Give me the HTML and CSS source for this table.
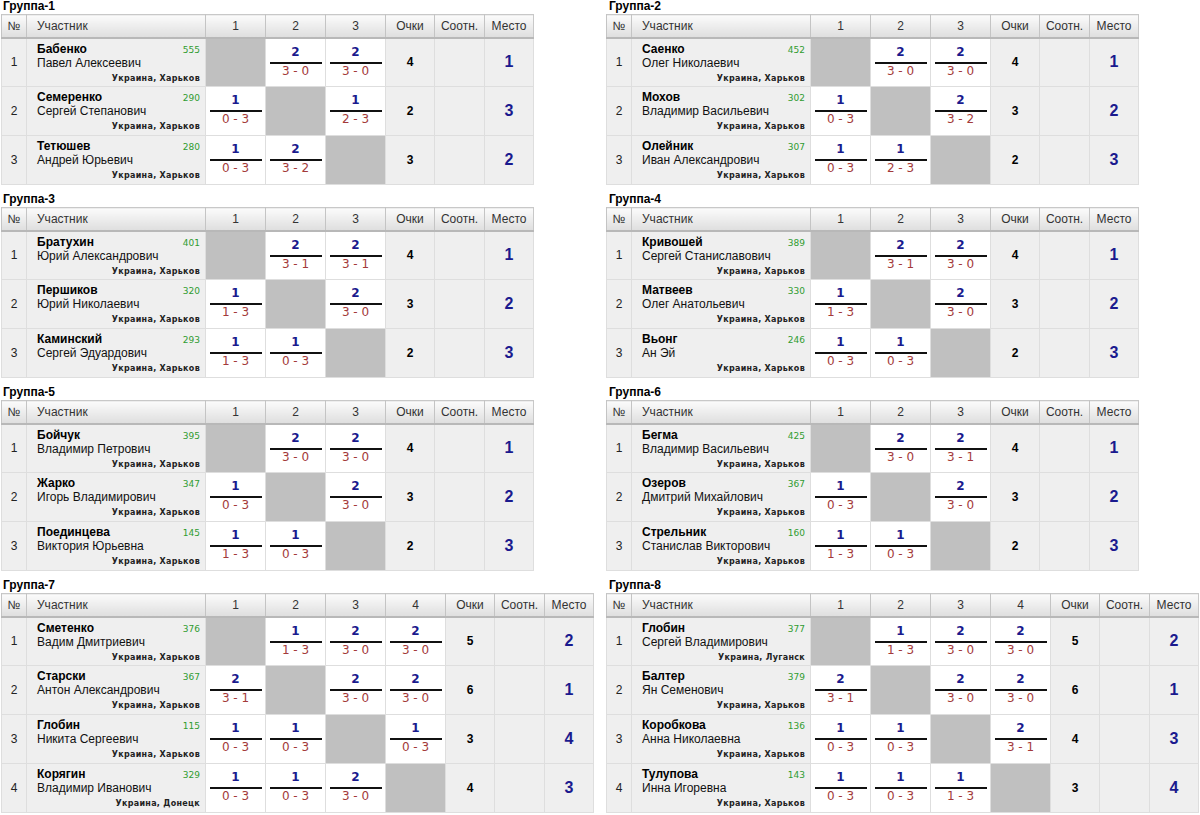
FILE: index.html
```html
<!DOCTYPE html>
<html lang="ru">
<head>
<meta charset="utf-8">
<title>Группы</title>
<link rel="stylesheet" href="styles.css">
</head>
<body>
<div class="page">

<section class="group">
<h2 class="group-title">Группа-1</h2>
<table class="grid">
<thead><tr><th class="c-no">№</th><th class="c-name">Участник</th><th class="c-res">1</th><th class="c-res">2</th><th class="c-res">3</th><th class="c-pts">Очки</th><th class="c-ratio">Соотн.</th><th class="c-place">Место</th></tr></thead>
<tbody>
<tr><td class="no">1</td><td class="player"><div class="line1"><b class="surname">Бабенко</b><span class="rating">555</span></div><div class="given">Павел Алексеевич</div><div class="city">Украина, Харьков</div></td><td class="self"></td><td class="res"><div class="won">2</div><div class="score">3 - 0</div></td><td class="res"><div class="won">2</div><div class="score">3 - 0</div></td><td class="pts">4</td><td class="ratio"></td><td class="place">1</td></tr>
<tr><td class="no">2</td><td class="player"><div class="line1"><b class="surname">Семеренко</b><span class="rating">290</span></div><div class="given">Сергей Степанович</div><div class="city">Украина, Харьков</div></td><td class="res"><div class="won">1</div><div class="score">0 - 3</div></td><td class="self"></td><td class="res"><div class="won">1</div><div class="score">2 - 3</div></td><td class="pts">2</td><td class="ratio"></td><td class="place">3</td></tr>
<tr><td class="no">3</td><td class="player"><div class="line1"><b class="surname">Тетюшев</b><span class="rating">280</span></div><div class="given">Андрей Юрьевич</div><div class="city">Украина, Харьков</div></td><td class="res"><div class="won">1</div><div class="score">0 - 3</div></td><td class="res"><div class="won">2</div><div class="score">3 - 2</div></td><td class="self"></td><td class="pts">3</td><td class="ratio"></td><td class="place">2</td></tr>
</tbody>
</table>
</section>

<section class="group group-right">
<h2 class="group-title">Группа-2</h2>
<table class="grid">
<thead><tr><th class="c-no">№</th><th class="c-name">Участник</th><th class="c-res">1</th><th class="c-res">2</th><th class="c-res">3</th><th class="c-pts">Очки</th><th class="c-ratio">Соотн.</th><th class="c-place">Место</th></tr></thead>
<tbody>
<tr><td class="no">1</td><td class="player"><div class="line1"><b class="surname">Саенко</b><span class="rating">452</span></div><div class="given">Олег Николаевич</div><div class="city">Украина, Харьков</div></td><td class="self"></td><td class="res"><div class="won">2</div><div class="score">3 - 0</div></td><td class="res"><div class="won">2</div><div class="score">3 - 0</div></td><td class="pts">4</td><td class="ratio"></td><td class="place">1</td></tr>
<tr><td class="no">2</td><td class="player"><div class="line1"><b class="surname">Мохов</b><span class="rating">302</span></div><div class="given">Владимир Васильевич</div><div class="city">Украина, Харьков</div></td><td class="res"><div class="won">1</div><div class="score">0 - 3</div></td><td class="self"></td><td class="res"><div class="won">2</div><div class="score">3 - 2</div></td><td class="pts">3</td><td class="ratio"></td><td class="place">2</td></tr>
<tr><td class="no">3</td><td class="player"><div class="line1"><b class="surname">Олейник</b><span class="rating">307</span></div><div class="given">Иван Александрович</div><div class="city">Украина, Харьков</div></td><td class="res"><div class="won">1</div><div class="score">0 - 3</div></td><td class="res"><div class="won">1</div><div class="score">2 - 3</div></td><td class="self"></td><td class="pts">2</td><td class="ratio"></td><td class="place">3</td></tr>
</tbody>
</table>
</section>

<section class="group">
<h2 class="group-title">Группа-3</h2>
<table class="grid">
<thead><tr><th class="c-no">№</th><th class="c-name">Участник</th><th class="c-res">1</th><th class="c-res">2</th><th class="c-res">3</th><th class="c-pts">Очки</th><th class="c-ratio">Соотн.</th><th class="c-place">Место</th></tr></thead>
<tbody>
<tr><td class="no">1</td><td class="player"><div class="line1"><b class="surname">Братухин</b><span class="rating">401</span></div><div class="given">Юрий Александрович</div><div class="city">Украина, Харьков</div></td><td class="self"></td><td class="res"><div class="won">2</div><div class="score">3 - 1</div></td><td class="res"><div class="won">2</div><div class="score">3 - 1</div></td><td class="pts">4</td><td class="ratio"></td><td class="place">1</td></tr>
<tr><td class="no">2</td><td class="player"><div class="line1"><b class="surname">Першиков</b><span class="rating">320</span></div><div class="given">Юрий Николаевич</div><div class="city">Украина, Харьков</div></td><td class="res"><div class="won">1</div><div class="score">1 - 3</div></td><td class="self"></td><td class="res"><div class="won">2</div><div class="score">3 - 0</div></td><td class="pts">3</td><td class="ratio"></td><td class="place">2</td></tr>
<tr><td class="no">3</td><td class="player"><div class="line1"><b class="surname">Каминский</b><span class="rating">293</span></div><div class="given">Сергей Эдуардович</div><div class="city">Украина, Харьков</div></td><td class="res"><div class="won">1</div><div class="score">1 - 3</div></td><td class="res"><div class="won">1</div><div class="score">0 - 3</div></td><td class="self"></td><td class="pts">2</td><td class="ratio"></td><td class="place">3</td></tr>
</tbody>
</table>
</section>

<section class="group group-right">
<h2 class="group-title">Группа-4</h2>
<table class="grid">
<thead><tr><th class="c-no">№</th><th class="c-name">Участник</th><th class="c-res">1</th><th class="c-res">2</th><th class="c-res">3</th><th class="c-pts">Очки</th><th class="c-ratio">Соотн.</th><th class="c-place">Место</th></tr></thead>
<tbody>
<tr><td class="no">1</td><td class="player"><div class="line1"><b class="surname">Кривошей</b><span class="rating">389</span></div><div class="given">Сергей Станиславович</div><div class="city">Украина, Харьков</div></td><td class="self"></td><td class="res"><div class="won">2</div><div class="score">3 - 1</div></td><td class="res"><div class="won">2</div><div class="score">3 - 0</div></td><td class="pts">4</td><td class="ratio"></td><td class="place">1</td></tr>
<tr><td class="no">2</td><td class="player"><div class="line1"><b class="surname">Матвеев</b><span class="rating">330</span></div><div class="given">Олег Анатольевич</div><div class="city">Украина, Харьков</div></td><td class="res"><div class="won">1</div><div class="score">1 - 3</div></td><td class="self"></td><td class="res"><div class="won">2</div><div class="score">3 - 0</div></td><td class="pts">3</td><td class="ratio"></td><td class="place">2</td></tr>
<tr><td class="no">3</td><td class="player"><div class="line1"><b class="surname">Вьонг</b><span class="rating">246</span></div><div class="given">Ан Эй</div><div class="city">Украина, Харьков</div></td><td class="res"><div class="won">1</div><div class="score">0 - 3</div></td><td class="res"><div class="won">1</div><div class="score">0 - 3</div></td><td class="self"></td><td class="pts">2</td><td class="ratio"></td><td class="place">3</td></tr>
</tbody>
</table>
</section>

<section class="group">
<h2 class="group-title">Группа-5</h2>
<table class="grid">
<thead><tr><th class="c-no">№</th><th class="c-name">Участник</th><th class="c-res">1</th><th class="c-res">2</th><th class="c-res">3</th><th class="c-pts">Очки</th><th class="c-ratio">Соотн.</th><th class="c-place">Место</th></tr></thead>
<tbody>
<tr><td class="no">1</td><td class="player"><div class="line1"><b class="surname">Бойчук</b><span class="rating">395</span></div><div class="given">Владимир Петрович</div><div class="city">Украина, Харьков</div></td><td class="self"></td><td class="res"><div class="won">2</div><div class="score">3 - 0</div></td><td class="res"><div class="won">2</div><div class="score">3 - 0</div></td><td class="pts">4</td><td class="ratio"></td><td class="place">1</td></tr>
<tr><td class="no">2</td><td class="player"><div class="line1"><b class="surname">Жарко</b><span class="rating">347</span></div><div class="given">Игорь Владимирович</div><div class="city">Украина, Харьков</div></td><td class="res"><div class="won">1</div><div class="score">0 - 3</div></td><td class="self"></td><td class="res"><div class="won">2</div><div class="score">3 - 0</div></td><td class="pts">3</td><td class="ratio"></td><td class="place">2</td></tr>
<tr><td class="no">3</td><td class="player"><div class="line1"><b class="surname">Поединцева</b><span class="rating">145</span></div><div class="given">Виктория Юрьевна</div><div class="city">Украина, Харьков</div></td><td class="res"><div class="won">1</div><div class="score">1 - 3</div></td><td class="res"><div class="won">1</div><div class="score">0 - 3</div></td><td class="self"></td><td class="pts">2</td><td class="ratio"></td><td class="place">3</td></tr>
</tbody>
</table>
</section>

<section class="group group-right">
<h2 class="group-title">Группа-6</h2>
<table class="grid">
<thead><tr><th class="c-no">№</th><th class="c-name">Участник</th><th class="c-res">1</th><th class="c-res">2</th><th class="c-res">3</th><th class="c-pts">Очки</th><th class="c-ratio">Соотн.</th><th class="c-place">Место</th></tr></thead>
<tbody>
<tr><td class="no">1</td><td class="player"><div class="line1"><b class="surname">Бегма</b><span class="rating">425</span></div><div class="given">Владимир Васильевич</div><div class="city">Украина, Харьков</div></td><td class="self"></td><td class="res"><div class="won">2</div><div class="score">3 - 0</div></td><td class="res"><div class="won">2</div><div class="score">3 - 1</div></td><td class="pts">4</td><td class="ratio"></td><td class="place">1</td></tr>
<tr><td class="no">2</td><td class="player"><div class="line1"><b class="surname">Озеров</b><span class="rating">367</span></div><div class="given">Дмитрий Михайлович</div><div class="city">Украина, Харьков</div></td><td class="res"><div class="won">1</div><div class="score">0 - 3</div></td><td class="self"></td><td class="res"><div class="won">2</div><div class="score">3 - 0</div></td><td class="pts">3</td><td class="ratio"></td><td class="place">2</td></tr>
<tr><td class="no">3</td><td class="player"><div class="line1"><b class="surname">Стрельник</b><span class="rating">160</span></div><div class="given">Станислав Викторович</div><div class="city">Украина, Харьков</div></td><td class="res"><div class="won">1</div><div class="score">1 - 3</div></td><td class="res"><div class="won">1</div><div class="score">0 - 3</div></td><td class="self"></td><td class="pts">2</td><td class="ratio"></td><td class="place">3</td></tr>
</tbody>
</table>
</section>

<section class="group">
<h2 class="group-title">Группа-7</h2>
<table class="grid grid-4">
<thead><tr><th class="c-no">№</th><th class="c-name">Участник</th><th class="c-res">1</th><th class="c-res">2</th><th class="c-res">3</th><th class="c-res">4</th><th class="c-pts">Очки</th><th class="c-ratio">Соотн.</th><th class="c-place">Место</th></tr></thead>
<tbody>
<tr><td class="no">1</td><td class="player"><div class="line1"><b class="surname">Сметенко</b><span class="rating">376</span></div><div class="given">Вадим Дмитриевич</div><div class="city">Украина, Харьков</div></td><td class="self"></td><td class="res"><div class="won">1</div><div class="score">1 - 3</div></td><td class="res"><div class="won">2</div><div class="score">3 - 0</div></td><td class="res"><div class="won">2</div><div class="score">3 - 0</div></td><td class="pts">5</td><td class="ratio"></td><td class="place">2</td></tr>
<tr><td class="no">2</td><td class="player"><div class="line1"><b class="surname">Старски</b><span class="rating">367</span></div><div class="given">Антон Александрович</div><div class="city">Украина, Харьков</div></td><td class="res"><div class="won">2</div><div class="score">3 - 1</div></td><td class="self"></td><td class="res"><div class="won">2</div><div class="score">3 - 0</div></td><td class="res"><div class="won">2</div><div class="score">3 - 0</div></td><td class="pts">6</td><td class="ratio"></td><td class="place">1</td></tr>
<tr><td class="no">3</td><td class="player"><div class="line1"><b class="surname">Глобин</b><span class="rating">115</span></div><div class="given">Никита Сергеевич</div><div class="city">Украина, Харьков</div></td><td class="res"><div class="won">1</div><div class="score">0 - 3</div></td><td class="res"><div class="won">1</div><div class="score">0 - 3</div></td><td class="self"></td><td class="res"><div class="won">1</div><div class="score">0 - 3</div></td><td class="pts">3</td><td class="ratio"></td><td class="place">4</td></tr>
<tr><td class="no">4</td><td class="player"><div class="line1"><b class="surname">Корягин</b><span class="rating">329</span></div><div class="given">Владимир Иванович</div><div class="city">Украина, Донецк</div></td><td class="res"><div class="won">1</div><div class="score">0 - 3</div></td><td class="res"><div class="won">1</div><div class="score">0 - 3</div></td><td class="res"><div class="won">2</div><div class="score">3 - 0</div></td><td class="self"></td><td class="pts">4</td><td class="ratio"></td><td class="place">3</td></tr>
</tbody>
</table>
</section>

<section class="group group-right">
<h2 class="group-title">Группа-8</h2>
<table class="grid grid-4">
<thead><tr><th class="c-no">№</th><th class="c-name">Участник</th><th class="c-res">1</th><th class="c-res">2</th><th class="c-res">3</th><th class="c-res">4</th><th class="c-pts">Очки</th><th class="c-ratio">Соотн.</th><th class="c-place">Место</th></tr></thead>
<tbody>
<tr><td class="no">1</td><td class="player"><div class="line1"><b class="surname">Глобин</b><span class="rating">377</span></div><div class="given">Сергей Владимирович</div><div class="city">Украина, Луганск</div></td><td class="self"></td><td class="res"><div class="won">1</div><div class="score">1 - 3</div></td><td class="res"><div class="won">2</div><div class="score">3 - 0</div></td><td class="res"><div class="won">2</div><div class="score">3 - 0</div></td><td class="pts">5</td><td class="ratio"></td><td class="place">2</td></tr>
<tr><td class="no">2</td><td class="player"><div class="line1"><b class="surname">Балтер</b><span class="rating">379</span></div><div class="given">Ян Семенович</div><div class="city">Украина, Харьков</div></td><td class="res"><div class="won">2</div><div class="score">3 - 1</div></td><td class="self"></td><td class="res"><div class="won">2</div><div class="score">3 - 0</div></td><td class="res"><div class="won">2</div><div class="score">3 - 0</div></td><td class="pts">6</td><td class="ratio"></td><td class="place">1</td></tr>
<tr><td class="no">3</td><td class="player"><div class="line1"><b class="surname">Коробкова</b><span class="rating">136</span></div><div class="given">Анна Николаевна</div><div class="city">Украина, Харьков</div></td><td class="res"><div class="won">1</div><div class="score">0 - 3</div></td><td class="res"><div class="won">1</div><div class="score">0 - 3</div></td><td class="self"></td><td class="res"><div class="won">2</div><div class="score">3 - 1</div></td><td class="pts">4</td><td class="ratio"></td><td class="place">3</td></tr>
<tr><td class="no">4</td><td class="player"><div class="line1"><b class="surname">Тулупова</b><span class="rating">143</span></div><div class="given">Инна Игоревна</div><div class="city">Украина, Харьков</div></td><td class="res"><div class="won">1</div><div class="score">0 - 3</div></td><td class="res"><div class="won">1</div><div class="score">0 - 3</div></td><td class="res"><div class="won">1</div><div class="score">1 - 3</div></td><td class="self"></td><td class="pts">3</td><td class="ratio"></td><td class="place">4</td></tr>
</tbody>
</table>
</section>

</div>
</body>
</html>
```
FILE: styles.css
```css
body {
  margin: 0;
  background: #fff;
  color: #000;
  font-family: "Liberation Sans", Arial, sans-serif;
}

.page {
  display: grid;
  grid-template-columns: 605px 594px;
  padding-left: 1px;
}

.group {
  margin-bottom: 8px;
}

.group-title {
  margin: 0;
  height: 14px;
  padding-left: 2px;
  font-size: 12px;
  line-height: 12px;
  font-weight: bold;
}

.group-right .group-title {
  padding-left: 3px;
}

.grid {
  border-collapse: collapse;
  table-layout: fixed;
  width: 532px;
  border: 1px solid #c8c8c8;
}

.grid-4 {
  width: 592px;
}

.grid th,
.grid td {
  box-sizing: border-box;
  padding: 0;
}

.grid th {
  height: 23px;
  font-size: 12px;
  font-weight: normal;
  color: #333;
  text-align: center;
  background: linear-gradient(#fbfbfb, #dedede);
  border-left: 1px solid #c4c4c4;
  border-bottom: 2px solid #b8b8b8;
}

.grid th.c-name {
  text-align: left;
  padding-left: 10px;
}

.c-no { width: 25px; }
.c-name { width: 179px; }
.c-res { width: 60px; }
.c-pts { width: 49px; }
.c-ratio { width: 50px; }
.c-place { width: 49px; }

.grid td {
  height: 49px;
  border: 1px solid #dedede;
  background: #efefef;
  text-align: center;
  vertical-align: middle;
}

.grid td.no {
  font-size: 12px;
  color: #222;
}

.grid td.player {
  text-align: left;
  vertical-align: top;
  padding: 3px 5px 0 10px;
}

.line1 {
  display: flex;
  justify-content: space-between;
  align-items: baseline;
  height: 14px;
  line-height: 14px;
}

.surname {
  font-size: 12px;
  font-weight: bold;
}

.rating {
  font-family: "DejaVu Sans", Verdana, sans-serif;
  font-size: 9px;
  color: #2f9c2f;
}

.given {
  height: 14px;
  font-size: 12px;
  line-height: 14px;
  color: #111;
}

.city {
  margin-top: 4px;
  text-align: right;
  font-family: "DejaVu Sans", Verdana, sans-serif;
  font-size: 8px;
  line-height: 10px;
  font-weight: bold;
  color: #222;
  letter-spacing: 0.3px;
}

.grid td.self {
  background: #c0c0c0;
}

.grid td.res {
  background: #fff;
  vertical-align: top;
  padding-top: 6px;
}

.won {
  width: 52px;
  margin: 0 auto;
  padding-bottom: 3px;
  border-bottom: 2px solid #111;
  font-family: "DejaVu Sans", Verdana, sans-serif;
  font-size: 12px;
  line-height: 14px;
  font-weight: bold;
  color: #1a1a8e;
}

.score {
  font-family: "DejaVu Sans", Verdana, sans-serif;
  font-size: 12px;
  line-height: 14px;
  color: #a33a3a;
}

.grid td.pts {
  font-size: 12px;
  font-weight: bold;
}

.grid td.place {
  font-size: 16px;
  font-weight: bold;
  color: #1a1a8e;
}
```
